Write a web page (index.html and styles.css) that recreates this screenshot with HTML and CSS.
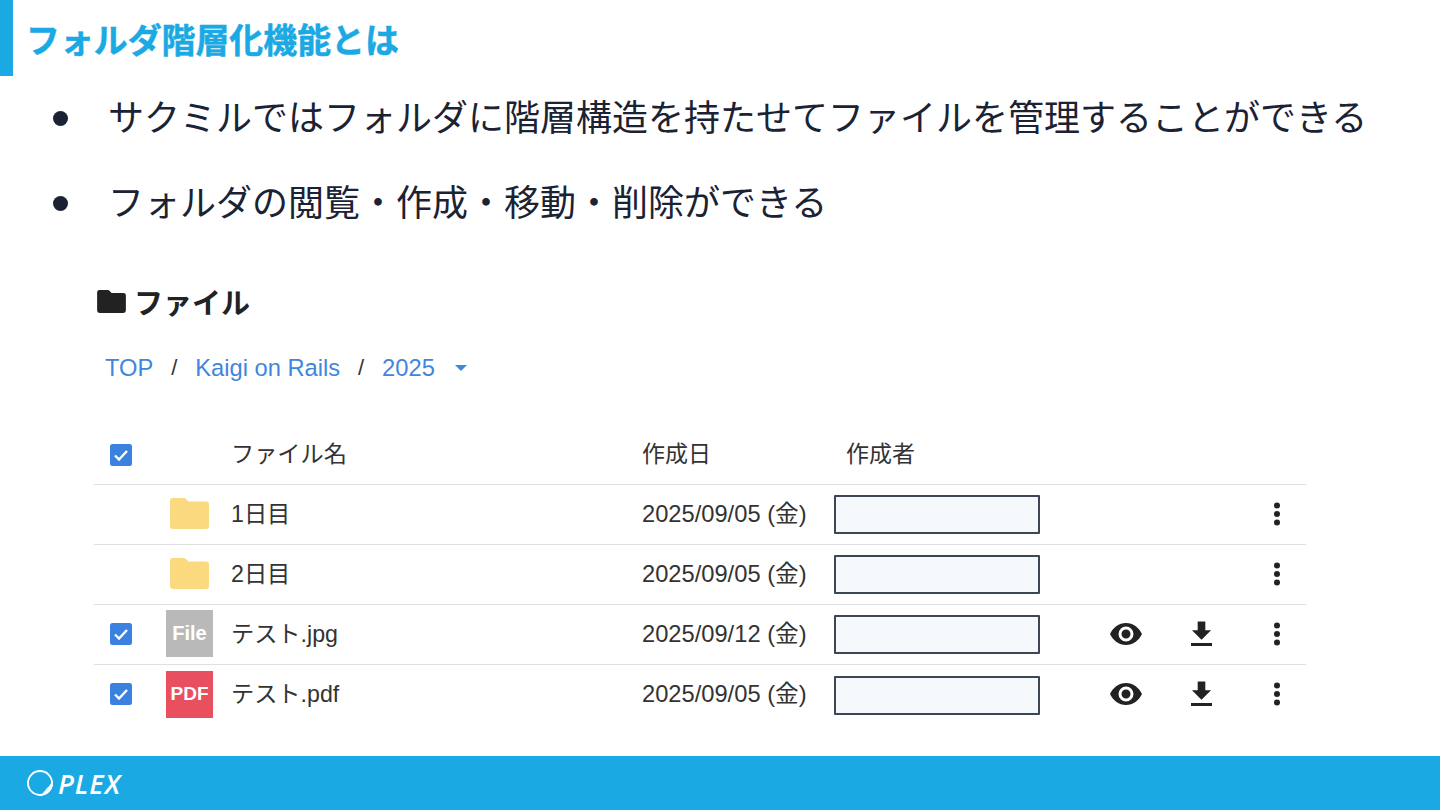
FILE: index.html
```html
<!DOCTYPE html>
<html lang="ja">
<head>
<meta charset="utf-8">
<title>フォルダ階層化機能とは</title>
<link rel="stylesheet" href="styles.css">
</head>
<body>
<div class="slide">
  <header class="head">
    <div class="head-bar"></div>
    <h1 class="head-title">フォルダ階層化機能とは</h1>
  </header>
  <ul class="points">
    <li class="point"><span class="dot"></span><span class="point-text">サクミルではフォルダに階層構造を持たせてファイルを管理することができる</span></li>
    <li class="point"><span class="dot"></span><span class="point-text">フォルダの閲覧・作成・移動・削除ができる</span></li>
  </ul>
  <section class="files">
    <h2 class="files-title">
      <svg class="files-icon" viewBox="0 0 30 24"><path fill="#222" d="M2.500 0h8.600c.8 0 1.400.3 1.900.8L15 3h12.500A2.500 2.500 0 0 1 30 5.500v16a2.500 2.500 0 0 1-2.500 2.500h-25A2.500 2.500 0 0 1 0 21.500v-19A2.500 2.500 0 0 1 2.500 0z"/></svg>
      <span>ファイル</span>
    </h2>
    <nav class="crumbs">
      <a class="crumb">TOP</a><span class="sep">/</span><a class="crumb">Kaigi on Rails</a><span class="sep">/</span><a class="crumb">2025</a>
      <svg class="caret" viewBox="0 0 12 6"><path fill="#3f86dc" d="M0 0h12L6 6z"/></svg>
    </nav>
    <div class="table">
      <div class="row row-head">
        <div class="c-check"><svg class="check" viewBox="0 0 22 22"><rect width="22" height="22" rx="2.500" fill="#3b82e0"/><path d="M5 11.500l4 4 8-8.500" fill="none" stroke="#fff" stroke-width="2.400"/></svg></div>
        <div class="c-icon"></div>
        <div class="c-name">ファイル名</div>
        <div class="c-date c-head-date">作成日</div>
        <div class="c-author c-author-head">作成者</div>
      </div>
      <div class="row">
        <div class="c-check"></div>
        <div class="c-icon"><svg class="folder" viewBox="0 0 39 31"><path fill="#fbd97f" d="M3 0h10.500c1 0 1.800.4 2.500 1l2.500 2.500H36a3 3 0 0 1 3 3V28a3 3 0 0 1-3 3H3a3 3 0 0 1-3-3V3a3 3 0 0 1 3-3z"/></svg></div>
        <div class="c-name">1日目</div>
        <div class="c-date">2025/09/05 (金)</div>
        <div class="c-author"><div class="author-box"></div></div>
        <div class="c-act"></div><div class="c-act"></div>
        <div class="c-act"><svg class="more" viewBox="0 0 8 24"><circle cx="4" cy="3.500" r="3" fill="#222"/><circle cx="4" cy="12" r="3" fill="#222"/><circle cx="4" cy="20.500" r="3" fill="#222"/></svg></div>
      </div>
      <div class="row">
        <div class="c-check"></div>
        <div class="c-icon"><svg class="folder" viewBox="0 0 39 31"><path fill="#fbd97f" d="M3 0h10.500c1 0 1.800.4 2.500 1l2.500 2.500H36a3 3 0 0 1 3 3V28a3 3 0 0 1-3 3H3a3 3 0 0 1-3-3V3a3 3 0 0 1 3-3z"/></svg></div>
        <div class="c-name">2日目</div>
        <div class="c-date">2025/09/05 (金)</div>
        <div class="c-author"><div class="author-box"></div></div>
        <div class="c-act"></div><div class="c-act"></div>
        <div class="c-act"><svg class="more" viewBox="0 0 8 24"><circle cx="4" cy="3.500" r="3" fill="#222"/><circle cx="4" cy="12" r="3" fill="#222"/><circle cx="4" cy="20.500" r="3" fill="#222"/></svg></div>
      </div>
      <div class="row">
        <div class="c-check c-check-row"><svg class="check" viewBox="0 0 22 22"><rect width="22" height="22" rx="2.500" fill="#3b82e0"/><path d="M5 11.500l4 4 8-8.500" fill="none" stroke="#fff" stroke-width="2.400"/></svg></div>
        <div class="c-icon"><div class="thumb thumb-file">File</div></div>
        <div class="c-name">テスト.jpg</div>
        <div class="c-date">2025/09/12 (金)</div>
        <div class="c-author"><div class="author-box"></div></div>
        <div class="c-act"><svg class="eye" viewBox="0 0 32 22"><path fill="#222" fill-rule="evenodd" d="M16 0C9 0 3 4.500 0 11c3 6.500 9 11 16 11s13-4.500 16-11C29 4.500 23 0 16 0zm0 18.500a7.500 7.500 0 1 1 0-15 7.500 7.500 0 0 1 0 15zM16 6.500a4.500 4.500 0 1 0 0 9 4.500 4.500 0 0 0 0-9z"/></svg></div>
        <div class="c-act"><svg class="down" viewBox="0 0 22 26"><path fill="#222" d="M7 0h8v9h6L11 19 1 9h6zM0 22.500h22V25.500H0z"/></svg></div>
        <div class="c-act"><svg class="more" viewBox="0 0 8 24"><circle cx="4" cy="3.500" r="3" fill="#222"/><circle cx="4" cy="12" r="3" fill="#222"/><circle cx="4" cy="20.500" r="3" fill="#222"/></svg></div>
      </div>
      <div class="row row-last">
        <div class="c-check c-check-row"><svg class="check" viewBox="0 0 22 22"><rect width="22" height="22" rx="2.500" fill="#3b82e0"/><path d="M5 11.500l4 4 8-8.500" fill="none" stroke="#fff" stroke-width="2.400"/></svg></div>
        <div class="c-icon"><div class="thumb thumb-pdf">PDF</div></div>
        <div class="c-name">テスト.pdf</div>
        <div class="c-date">2025/09/05 (金)</div>
        <div class="c-author"><div class="author-box"></div></div>
        <div class="c-act"><svg class="eye" viewBox="0 0 32 22"><path fill="#222" fill-rule="evenodd" d="M16 0C9 0 3 4.500 0 11c3 6.500 9 11 16 11s13-4.500 16-11C29 4.500 23 0 16 0zm0 18.500a7.500 7.500 0 1 1 0-15 7.500 7.500 0 0 1 0 15zM16 6.500a4.500 4.500 0 1 0 0 9 4.500 4.500 0 0 0 0-9z"/></svg></div>
        <div class="c-act"><svg class="down" viewBox="0 0 22 26"><path fill="#222" d="M7 0h8v9h6L11 19 1 9h6zM0 22.500h22V25.500H0z"/></svg></div>
        <div class="c-act"><svg class="more" viewBox="0 0 8 24"><circle cx="4" cy="3.500" r="3" fill="#222"/><circle cx="4" cy="12" r="3" fill="#222"/><circle cx="4" cy="20.500" r="3" fill="#222"/></svg></div>
      </div>
    </div>
  </section>
  <footer class="foot">
    <svg class="logo" viewBox="0 0 28 28"><circle cx="14" cy="14" r="12" fill="none" stroke="#fff" stroke-width="1.800"/><path fill="#fff" d="M26.500 11c.9 3.800.2 7.500-2 10.500-3 4-7.500 5.800-12.500 5.200 1.500-.6 3-.8 4.800-2.500 2-1.800 2.800-3.800 4.600-5.400 1.800-1.600 3.800-3.800 5.100-7.800z"/></svg>
    <span class="logo-text">PLEX</span>
  </footer>
</div>
</body>
</html>
```
FILE: styles.css
```css
* { box-sizing: border-box; }
html, body { margin: 0; padding: 0; }
body {
  width: 1440px;
  height: 810px;
  overflow: hidden;
  background: #fff;
  font-family: "Liberation Sans", "Noto Sans CJK JP", sans-serif;
}
.slide {
  width: 1440px;
  height: 810px;
  display: flex;
  flex-direction: column;
}
.head {
  height: 76px;
  display: flex;
  gap: 13px;
}
.head-bar { width: 13px; background: #1ba9e4; }
.head-title {
  margin: 0;
  font-family: "Noto Sans CJK JP", sans-serif;
  font-size: 33.900px;
  font-weight: 700;
  line-height: 78px;
  color: #1ba9e4;
  -webkit-text-stroke: 0.5px #1ba9e4;
}
.points {
  list-style: none;
  margin: 0;
  padding: 0 0 0 53px;
}
.point {
  height: 85px;
  display: flex;
  align-items: center;
  gap: 40px;
  font-family: "Noto Sans CJK JP", sans-serif;
  font-size: 36px;
  color: #1a2233;
  white-space: nowrap;
}
.point-text { padding-bottom: 8px; }
.dot {
  width: 15px;
  height: 15px;
  border-radius: 50%;
  background: #1a2233;
  flex: none;
}
.files {
  padding: 35px 134px 0 94px;
  color: #333;
}
.files-title {
  margin: 0;
  height: 40px;
  padding-left: 3px;
  display: flex;
  align-items: center;
  gap: 8px;
  font-family: "Noto Sans CJK JP", sans-serif;
  font-size: 29px;
  font-weight: 700;
  color: #222;
}
.files-icon { width: 29px; height: 23px; flex: none; }
.crumbs {
  margin-top: 27px;
  height: 40px;
  padding-left: 11px;
  display: flex;
  align-items: center;
  font-size: 23.700px;
}
.crumb { color: #3f86dc; }
.sep { color: #333; width: 42px; text-align: center; font-size: 22px; }
.caret { width: 12px; height: 6px; margin-left: 20px; }
.table { margin-top: 38px; }
.row {
  display: grid;
  grid-template-columns: 66px 71px 411px 192px 252px 80px 71px 69px;
  height: 60px;
  align-items: center;
  border-bottom: 1.500px solid #dfdfdf;
  font-size: 23.200px;
  color: #333;
}
.row-head { height: 59px; }
.row-last { border-bottom: none; }
.c-check { padding-left: 16px; display: flex; }
.c-check-row { padding-bottom: 2px; }
.c-icon { display: flex; padding-bottom: 2px; }
.c-name, .c-date, .c-author-head { white-space: nowrap; padding-bottom: 6px; }
.c-date { font-size: 23.700px; }
.c-head-date { font-size: 23px; }
.c-author-head { padding-left: 12px; font-size: 23px; }
.c-act { display: flex; justify-content: center; padding-bottom: 2px; }
.c-act:last-child { justify-content: flex-end; padding-right: 25px; }
.check { width: 22px; height: 22px; }
.folder { width: 39px; height: 31px; margin-left: 10px; }
.thumb {
  width: 47px;
  height: 47px;
  margin-left: 6px;
  display: flex;
  align-items: center;
  justify-content: center;
  color: #fff;
  font-size: 20px;
  font-weight: 700;
}
.thumb-file { background: #b9b9b9; }
.thumb-pdf { background: #e9505f; font-size: 19px; }
.author-box {
  width: 206px;
  height: 39px;
  background: #f6f9fb;
  border: 2px solid #3d4654;
  border-radius: 1px;
}
.eye { width: 32px; height: 22px; }
.down { width: 21px; height: 26px; }
.more { width: 8px; height: 24px; }
.foot {
  margin-top: auto;
  height: 54px;
  background: #1ba9e4;
  display: flex;
  align-items: center;
  padding-left: 26px;
  gap: 4px;
}
.logo { width: 28px; height: 28px; }
.logo-text {
  font-family: "Open Sans", sans-serif;
  font-style: italic;
  font-weight: 600;
  font-size: 27px;
  color: #fff;
  letter-spacing: 1px;
}
```
